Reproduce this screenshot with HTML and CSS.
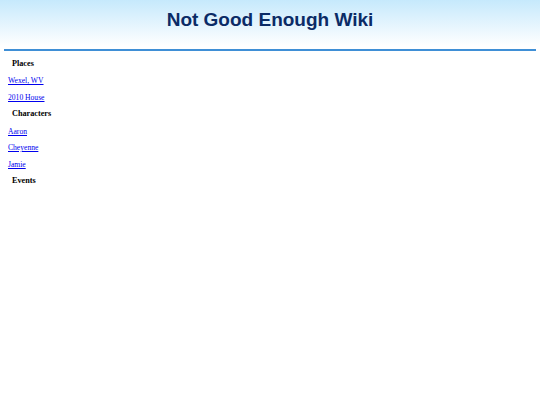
FILE: index.html
```html
<!DOCTYPE html>
<html lang="en">
<head>
    <meta charset="UTF-8" />
    <meta name="viewport" content="width=device-width, initial-scale=1" />
    <title>Not Good Enough Wiki</title>
    <link rel="stylesheet" href="styles.css">
</head>
<body>
    <div class="banner">
        <h1>Not Good Enough Wiki</h1>
    </div>
    <hr class="rule" />

    <div class="content">
        <h3>Places</h3>
        <p><a href="#">Wexel, WV</a></p>
        <p><a href="#">2010 House</a></p>

        <h3>Characters</h3>
        <p><a href="#">Aaron</a></p>
        <p><a href="#">Cheyenne</a></p>
        <p><a href="#">Jamie</a></p>

        <h3>Events</h3>
    </div>
</body>
</html>
```

FILE: styles.css
```css
body { margin: 0; font-family: "Liberation Serif", "Times New Roman", serif; font-size: 7.6px; line-height: 9px; }
.banner { height: 46px; background: linear-gradient(to bottom, #c6e9fc, #ffffff); display: flex; align-items: center; justify-content: center; }
.banner h1 { margin: 0 0 8px; font-family: "Liberation Sans", Arial, sans-serif; font-size: 19px; color: #0b2b66; }
.rule { margin: 3px 4px 0; height: 2px; border: none; background-color: #3f8fd6; }
.content { padding: 0 8px; }
.content h3 { margin: 7.5px 0; padding-left: 4px; font-size: 8.2px; line-height: 10px; }
.content p { margin: 7.5px 0; }
a { color: #0000ee; }
```
